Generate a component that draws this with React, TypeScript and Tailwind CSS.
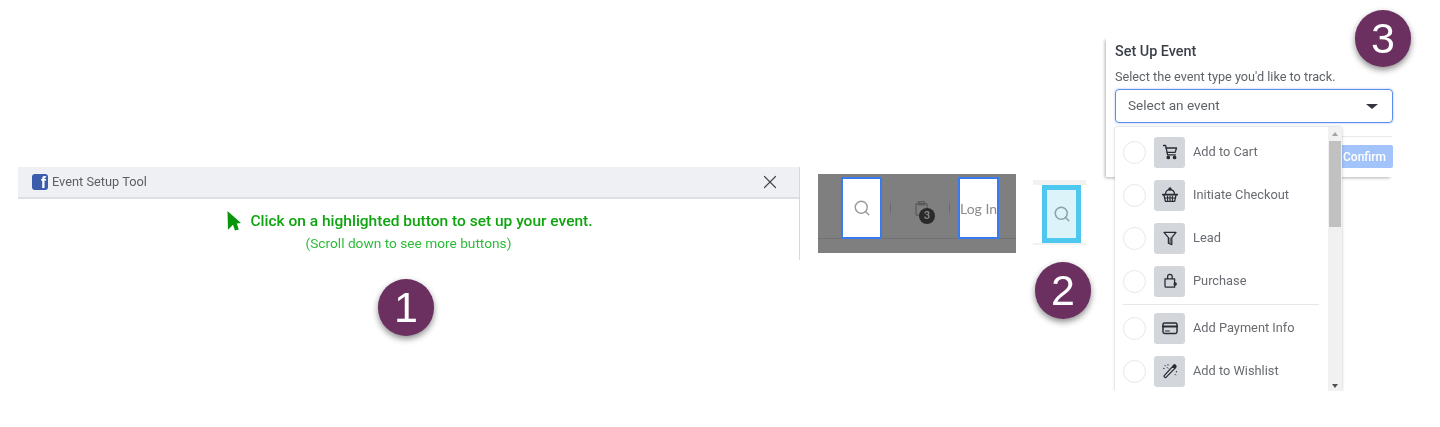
import { Search, X } from "lucide-react";
import type { ReactNode } from "react";

const font = "font-['Roboto','Liberation_Sans',sans-serif]";

interface EventItem {
  label: string;
  icon: ReactNode;
}

const Glyph = ({ children }: { children: ReactNode }) => (
  <svg viewBox="0 0 16 16" fill="none" stroke="#2a2d33" strokeWidth="1.3" strokeLinecap="round" strokeLinejoin="round" className="h-[16px] w-[16px]">
    {children}
  </svg>
);

const standardEvents: EventItem[] = [
  {
    label: "Add to Cart",
    icon: (
      <Glyph>
        <path d="M1.5 1.5H3.6L5.6 10.8H13.4" />
        <path d="M4.2 4H14.5L13.2 8.3H5.2" />
        <circle cx="6.3" cy="13.4" r="1.2" fill="#2a2d33" />
        <circle cx="12.6" cy="13.4" r="1.2" fill="#2a2d33" />
      </Glyph>
    ),
  },
  {
    label: "Initiate Checkout",
    icon: (
      <Glyph>
        <path d="M3.5 7A4.5 4.5 0 0 1 12.5 7" />
        <circle cx="8" cy="2" r="1" fill="#2a2d33" />
        <path d="M0.8 7.6H15.2" strokeWidth="1.8" />
        <path d="M2 8L3.4 14.4H12.6L14 8" />
        <path d="M5.6 9V13.5M8 9V13.5M10.4 9V13.5M2.6 11H13.4" strokeWidth="1.1" />
      </Glyph>
    ),
  },
  {
    label: "Lead",
    icon: (
      <Glyph>
        <path d="M2 2.4H14L9.8 7.6V14.6L6.4 13.2V7.6Z" />
        <path d="M8.1 8V12.6" strokeWidth="1" />
      </Glyph>
    ),
  },
  {
    label: "Purchase",
    icon: (
      <Glyph>
        <path d="M3 5.8H12.6V14.2H4.2A1.2 1.2 0 0 1 3 13Z" />
        <path d="M5.6 5.6V3.6A2.3 2.3 0 0 1 10.2 3.6V5.6" />
        <circle cx="13.2" cy="11" r="1.7" fill="#2a2d33" stroke="none" />
      </Glyph>
    ),
  },
];

const otherEvents: EventItem[] = [
  {
    label: "Add Payment Info",
    icon: (
      <Glyph>
        <rect x="1" y="3" width="14" height="10.4" rx="1.6" strokeWidth="1.5" />
        <path d="M1 6.6H15" strokeWidth="2" />
        <path d="M3.4 11H7.4" strokeWidth="1" />
      </Glyph>
    ),
  },
  {
    label: "Add to Wishlist",
    icon: (
      <Glyph>
        <path d="M10.8 3.4L12.8 5.4L4 14.4C3.2 15 1.6 13.6 2.2 12.6Z" />
        <path d="M10.8 3.4L12 1.8C12.6 1.2 14.4 2.8 14 3.8L12.8 5.4" fill="#2a2d33" />
        <path d="M3 2.4L3.6 3M6 1.6V2.2M1.6 5.4H2.2M5.4 4.6L6 5.2M14.4 8.4V9M13 11.4L13.6 12" strokeWidth="1" />
      </Glyph>
    ),
  },
];

const StepBadge = ({ n, className }: { n: number; className: string }) => (
  <div
    className={`absolute flex h-[57px] w-[56px] items-center justify-center rounded-full bg-[#6b2f60] text-[43px] leading-none text-white shadow-[0_3px_6px_rgba(0,0,0,0.45)] font-['Liberation_Sans',sans-serif] ${className}`}
  >
    {n}
  </div>
);

const EventRow = ({ label, icon }: EventItem) => (
  <div className="flex h-[43px] items-center pl-2">
    <div className="h-[23px] w-[23px] rounded-full border border-[#e6e7ea] bg-white" />
    <div className="ml-2 flex h-[31px] w-[31px] items-center justify-center rounded-[3px] bg-[#d3d6db]">{icon}</div>
    <span className="ml-2 text-[12.8px] text-[#696c71]">{label}</span>
  </div>
);

const SetupBar = () => (
  <div className={`absolute left-[18px] top-[167px] h-[93px] w-[782px] border-r border-[#d5d8dd] bg-white ${font}`}>
    <div className="flex h-[32px] items-center justify-between border-b-2 border-[#dcdfe5] bg-[#eef0f4] pl-[14px] pr-[18px]">
      <div className="flex items-center">
        <div className="flex h-[16px] w-[16px] items-end justify-end overflow-hidden rounded-[3px] bg-[#3b5cad] pr-[2px] font-['Liberation_Sans',sans-serif] text-[16px] font-bold leading-[15px] text-white">
          f
        </div>
        <span className="ml-1 text-[12.8px] text-[#5c5f64]">Event Setup Tool</span>
      </div>
      <X className="h-[22px] w-[22px] text-[#444850]" strokeWidth={1.3} />
    </div>
    <div className="flex flex-col items-center pt-[11px]">
      <div className="flex items-center pl-[3px]">
        <svg viewBox="0 0 15 20" className="h-[20px] w-[15px]">
          <path d="M0.5 0 L14 12 L9.8 12.4 L11.8 18.4 L8 19.6 L6 13.8 L1 18.8 Z" fill="#0a950a" />
        </svg>
        <span className="ml-2 text-[15.5px] font-medium leading-[22px] text-[#0ea50e]">
          Click on a highlighted button to set up your event.
        </span>
      </div>
      <span className="mt-[2px] text-[13.7px] leading-[18px] text-[#2dbb3b]">(Scroll down to see more buttons)</span>
    </div>
  </div>
);

const HighlightedNav = () => (
  <div className="absolute left-[818px] top-[174px] h-[79px] w-[198px] bg-[#7f7f7f]">
    <div className="absolute left-0 right-0 top-[64px] h-px bg-[#727272]" />
    <div className="relative flex items-center pl-[23px] pt-[3px]">
      <div className="flex h-[62px] w-[41px] items-center justify-center border-[2.5px] border-[#3a7af0] bg-white">
        <Search className="h-[18px] w-[18px] text-[#9a9a9a]" strokeWidth={1.9} />
      </div>
      <div className="ml-2 h-[10px] w-px bg-[#6a6a6a]" />
      <div className="relative ml-[24px] h-[15px] w-[13px]">
        <svg viewBox="0 0 13 15" fill="none" stroke="#5a5a5a" strokeWidth="1.3" className="h-[15px] w-[13px]">
          <rect x="1" y="2.6" width="11" height="11.6" rx="1" />
          <rect x="3.6" y="0.7" width="5.6" height="3" />
        </svg>
        <span className="absolute left-[4px] top-[7px] flex h-[16px] w-[16px] items-center justify-center rounded-full bg-[#2a2a2a] text-[11px] font-bold text-[#8a8a8a] font-['Lato',sans-serif]">
          3
        </span>
      </div>
      <div className="ml-[21px] h-[10px] w-px bg-[#6a6a6a]" />
      <div className="ml-[8px] flex h-[62px] w-[41px] items-center border-[2.5px] border-[#3a7af0] bg-white text-[14px] whitespace-nowrap text-[#8c8c8c] font-['Lato',sans-serif]">
        Log In
      </div>
    </div>
  </div>
);

const SearchFocus = () => (
  <div className="absolute left-[1033px] top-[180px] h-[65px] w-[53px] border-t-[5px] border-b-[2px] border-[#f2f2f2] pl-[9px]">
    <div className="flex h-[58px] w-[39px] items-center justify-center border-[5px] border-[#4fc8ef] bg-[#dcf3fa]">
      <Search className="h-[18px] w-[18px] text-[#8da0a6]" strokeWidth={2} />
    </div>
  </div>
);

const SetupCard = () => (
  <div className={font}>
    <div className="absolute left-[1106px] top-[37px] h-[140px] w-[287px] bg-white pl-[9px] shadow-[-2px_2px_3px_-1px_rgba(0,0,0,0.3)]">
      <h3 className="mt-[6px] text-[14.4px] font-medium leading-[18px] text-[#3a3f48]">Set Up Event</h3>
      <p className="mt-[7px] text-[12.7px] leading-[18px] text-[#5f6368]">Select the event type you'd like to track.</p>
      <div className="mt-[3px] flex h-[34px] w-[278px] items-center justify-between rounded-[4px] border border-[#5b8fee] pb-[2px] pl-3 pr-[14px] text-[13.6px] text-[#5f6368] shadow-[0_0_2px_rgba(59,120,231,0.6)]">
        <span>Select an event</span>
        <div className="mt-[2px] h-0 w-0 border-x-[6px] border-t-[5px] border-x-transparent border-t-[#33373d]" />
      </div>
      <div className="ml-[227px] mt-[13px] h-px w-[50px] bg-[#e8e9ec]" />
      <div className="ml-[227px] mt-[8px] flex h-[23px] w-[51px] items-center rounded-r-[2px] bg-[#a3c4fb] pl-[1px] text-[12px] font-medium text-white">
        Confirm
      </div>
    </div>
    <div className="absolute left-[1115px] top-[127px] flex h-[264px] w-[227px] overflow-hidden rounded-t-[3px] bg-white shadow-[0_0_3px_rgba(0,0,0,0.25)] [clip-path:inset(-4px_-4px_0_-4px)]">
      <div className="flex-1 pt-[3.5px]">
        {standardEvents.map((item) => (
          <EventRow key={item.label} {...item} />
        ))}
        <div className="mt-[1.5px] mb-[1.5px] ml-2 h-px w-[196px] bg-[#e6e7ea]" />
        {otherEvents.map((item) => (
          <EventRow key={item.label} {...item} />
        ))}
      </div>
      <div className="flex w-[14px] flex-col items-center bg-[#f1f1f1]">
        <div className="mt-[5px] h-0 w-0 border-x-[3.5px] border-b-[4px] border-x-transparent border-b-[#a3a3a3]" />
        <div className="mt-[5px] h-[86px] w-[12px] bg-[#c1c1c1]" />
        <div className="mt-auto mb-[3px] h-0 w-0 border-x-[3.5px] border-t-[4px] border-x-transparent border-t-[#505050]" />
      </div>
    </div>
  </div>
);

export default function App() {
  return (
    <div className="relative h-[427px] w-[1440px] overflow-hidden bg-white blur-[0.4px]">
      <SetupBar />
      <HighlightedNav />
      <SearchFocus />
      <SetupCard />
      <StepBadge n={1} className="left-[378px] top-[279px]" />
      <StepBadge n={2} className="left-[1035px] top-[262px]" />
      <StepBadge n={3} className="left-[1355px] top-[10px]" />
    </div>
  );
}
